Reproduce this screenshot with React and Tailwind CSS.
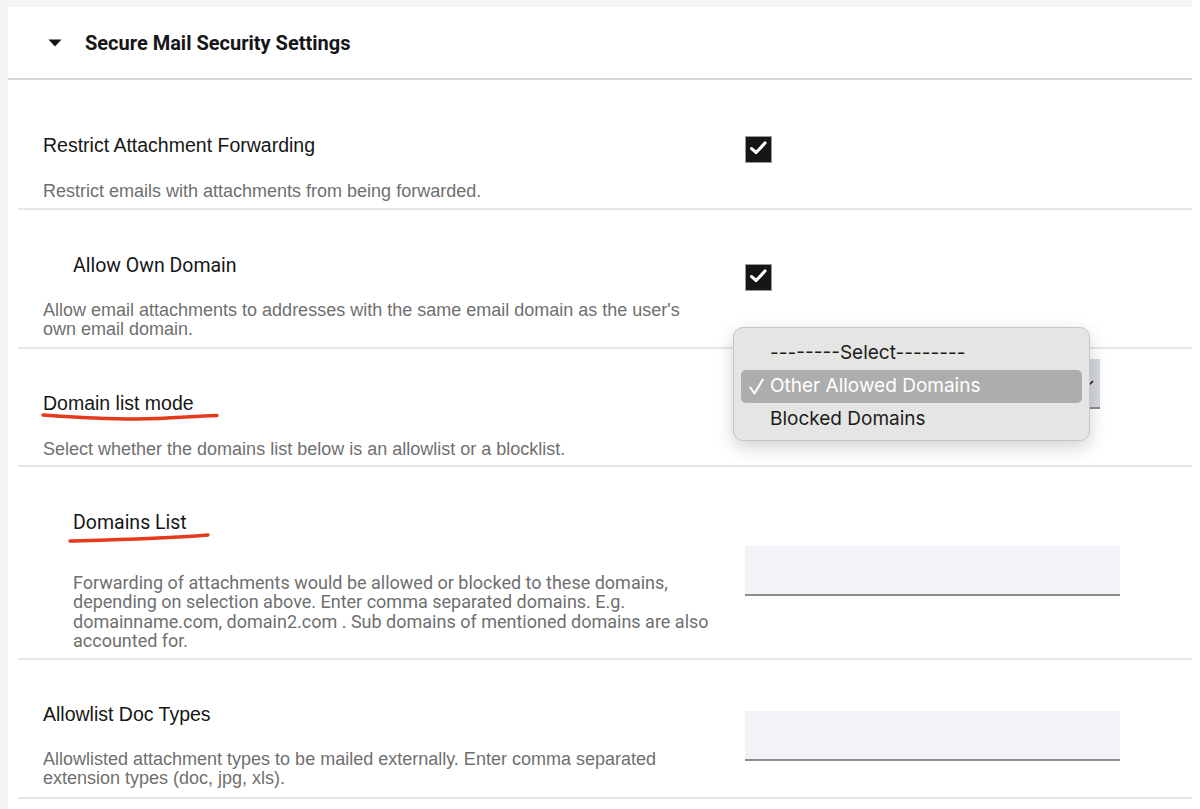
import React from "react";

const SANS = "font-['Liberation_Sans',Arial,sans-serif]";
const PLEX = "font-['Roboto',sans-serif]";

// Black checked checkbox
const CheckedBox = () => (
  <div className="w-[27px] h-[27px] bg-[#161616] border border-[#9a9a9a] flex items-center justify-center">
    <svg width="27" height="27" viewBox="0 0 27 27">
      <path d="M6 12.5 L11 16.8 L20.5 6.5" stroke="#fff" strokeWidth="3.4" fill="none" strokeLinecap="round" strokeLinejoin="round" />
    </svg>
  </div>
);

// Hand drawn red underline annotation
const RedLine = ({ d, w, className }) => (
  <svg className={"absolute pointer-events-none " + className} width={w} height="14" viewBox={`0 0 ${w} 14`}>
    <path d={d} stroke="#e63a1e" strokeWidth="3.4" fill="none" strokeLinecap="round" />
  </svg>
);

const TextInput = () => (
  <div className="w-[375px] h-[50px] bg-[#f2f3f6] border-b-2 border-[#8d8d8d]" />
);

const LABEL = "text-[19.5px] leading-[24px] text-[#161616] whitespace-nowrap";
const DESC = "text-[18px] leading-[19px] text-[#6f6f6f] whitespace-nowrap";

export default function App() {
  return (
    <div className="min-h-screen bg-white">
      <div className="mr-[8px] bg-[#f4f4f4] pt-[7px] pl-[8px] min-h-[809px]">
        <div className="bg-white min-h-[802px]">
          {/* Header */}
          <div className="h-[73px] flex items-center pl-[40px] border-b-2 border-[#d8d8d8]">
            <svg width="14" height="8" viewBox="0 0 14 8" className="mt-[1px]">
              <path d="M0.5 0.5 L13.5 0.5 L7 7.5 Z" fill="#161616" />
            </svg>
            <h1 className={`${PLEX} ml-[23px] text-[20px] font-bold text-[#161616]`}>
              Secure Mail Security Settings
            </h1>
          </div>

          <div className="ml-[10px]">
            {/* Restrict Attachment Forwarding */}
            <div className="h-[130px] flex pl-[25px] border-b-2 border-[#e6e6e6]">
              <div className="w-[680px] pt-[53px]">
                <p className={`${SANS} ${LABEL}`}>Restrict Attachment Forwarding</p>
                <p className={`${SANS} ${DESC} mt-[25px]`}>
                  Restrict emails with attachments from being forwarded.
                </p>
              </div>
              <div className="ml-[22px] pt-[56px]">
                <CheckedBox />
              </div>
            </div>

            {/* Allow Own Domain */}
            <div className="h-[139px] flex pl-[25px] border-b-2 border-[#e6e6e6]">
              <div className="w-[680px] pt-[44px]">
                <p className={`${PLEX} ${LABEL} pl-[30px]`}>Allow Own Domain</p>
                <p className={`${SANS} ${DESC} mt-[23px]`}>
                  Allow email attachments to addresses with the same email domain as the user's
                  <br />
                  own email domain.
                </p>
              </div>
              <div className="ml-[22px] pt-[54px]">
                <CheckedBox />
              </div>
            </div>

            {/* Domain list mode */}
            <div className="relative h-[118px] flex pl-[25px] border-b-2 border-[#e6e6e6]">
              <div className="w-[680px] pt-[42px]">
                <div className="relative w-fit">
                  <p className={`${SANS} ${LABEL}`}>Domain list mode</p>
                  <RedLine w={180} className="left-[-2px] top-[17px]" d="M2 7 C 30 9, 60 11, 95 11 C 130 11, 150 8, 176 7.5" />
                </div>
                <p className={`${SANS} ${DESC} mt-[25px]`}>
                  Select whether the domains list below is an allowlist or a blocklist.
                </p>
              </div>
              <div className="ml-[22px] pt-[10px]">
                <div className="relative w-[355px] h-[50px] bg-[#d6d9de] border-b-2 border-[#8d8d8d]">
                  <svg width="10" height="6" viewBox="0 0 10 6" className="absolute right-[6px] top-[21px]">
                    <path d="M1 1 L5 5 L9 1" stroke="#161616" strokeWidth="1.5" fill="none" />
                  </svg>
                </div>
              </div>

              {/* Open select menu */}
              <div className="absolute z-10 left-[715px] top-[-22px] w-[357px] h-[114px] rounded-[10px] border border-[#c6c6c6] bg-[#e5e5e4] shadow-[0_6px_18px_rgba(0,0,0,0.18)] pt-[9px] px-[7px] font-['Inter',sans-serif] text-[19px]">
                <div className="h-[33px] flex items-center pl-[29px] text-[#1c1c1c]">--------Select--------</div>
                <div className="h-[33px] flex items-center rounded-[5px] bg-[#adadad] text-white">
                  <span className="w-[29px] pl-[8px] flex items-center">
                    <svg width="15" height="17" viewBox="0 0 15 17">
                      <path d="M1.2 9.5 L5.5 15.5 L13.8 1.5" stroke="#fff" strokeWidth="2" fill="none" strokeLinecap="round" strokeLinejoin="round" />
                    </svg>
                  </span>
                  <span>Other Allowed Domains</span>
                </div>
                <div className="h-[33px] flex items-center pl-[29px] text-[#1c1c1c]">Blocked Domains</div>
              </div>
            </div>

            {/* Domains List */}
            <div className="h-[193px] flex pl-[25px] border-b-2 border-[#e6e6e6]">
              <div className="w-[680px] pt-[44px] pl-[30px]">
                <div className="relative w-fit">
                  <p className={`${PLEX} ${LABEL}`}>Domains List</p>
                  <RedLine w={145} className="left-[-5px] top-[19px]" d="M2 11 C 40 10, 90 9, 140 5" />
                </div>
                <p className={`${PLEX} text-[18px] leading-[19.4px] text-[#6f6f6f] whitespace-nowrap mt-[38px]`}>
                  Forwarding of attachments would be allowed or blocked to these domains,
                  <br />
                  depending on selection above. Enter comma separated domains. E.g.
                  <br />
                  domainname.com, domain2.com . Sub domains of mentioned domains are also
                  <br />
                  accounted for.
                </p>
              </div>
              <div className="ml-[22px] pt-[79px]">
                <TextInput />
              </div>
            </div>

            {/* Allowlist Doc Types */}
            <div className="h-[139px] flex pl-[25px] border-b-2 border-[#e6e6e6]">
              <div className="w-[680px] pt-[42px]">
                <p className={`${SANS} ${LABEL}`}>Allowlist Doc Types</p>
                <p className={`${SANS} ${DESC} mt-[24px]`}>
                  Allowlisted attachment types to be mailed externally. Enter comma separated
                  <br />
                  extension types (doc, jpg, xls).
                </p>
              </div>
              <div className="ml-[22px] pt-[51px]">
                <TextInput />
              </div>
            </div>
          </div>
        </div>
      </div>
    </div>
  );
}
